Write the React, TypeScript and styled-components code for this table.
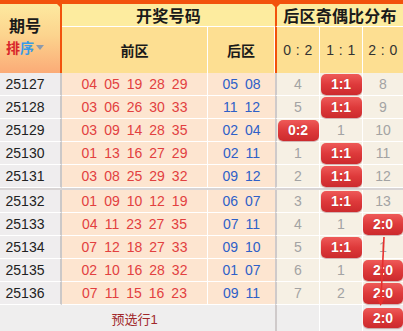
import { createGlobalStyle, styled, css } from "styled-components";

const COLS = "62px 146px 67px 45px 43px 40px";
const ORANGE = "#f2520c";

type Dist = (number | string)[];
type Draw = { period: string; front: string[]; back: string[]; dist: Dist; groupStart?: boolean };

const draws: Draw[] = [
  { period: "25127", front: ["04", "05", "19", "28", "29"], back: ["05", "08"], dist: [4, "1:1", 8] },
  { period: "25128", front: ["03", "06", "26", "30", "33"], back: ["11", "12"], dist: [5, "1:1", 9] },
  { period: "25129", front: ["03", "09", "14", "28", "35"], back: ["02", "04"], dist: ["0:2", 1, 10] },
  { period: "25130", front: ["01", "13", "16", "27", "29"], back: ["02", "11"], dist: [1, "1:1", 11] },
  { period: "25131", front: ["03", "08", "25", "29", "32"], back: ["09", "12"], dist: [2, "1:1", 12] },
  { period: "25132", front: ["01", "09", "10", "12", "19"], back: ["06", "07"], dist: [3, "1:1", 13], groupStart: true },
  { period: "25133", front: ["04", "11", "23", "27", "35"], back: ["07", "11"], dist: [4, 1, "2:0"] },
  { period: "25134", front: ["07", "12", "18", "27", "33"], back: ["09", "10"], dist: [5, "1:1", 1] },
  { period: "25135", front: ["02", "10", "16", "28", "32"], back: ["01", "07"], dist: [6, 1, "2:0"] },
  { period: "25136", front: ["07", "11", "15", "16", "23"], back: ["09", "11"], dist: [7, 2, "2:0"] },
];

const GlobalStyle = createGlobalStyle`
  html, body {
    margin: 0;
    padding: 0;
    background: #ffffff;
  }
  body {
    font-family: "Liberation Sans", "Noto Sans CJK SC", sans-serif;
  }
`;

function App() {
  return (
    <>
      <GlobalStyle />
      <Chart>
        <TopBar />
        <Head>
          <PeriodHead>
            <HeadLabel>期号</HeadLabel>
            <Sort>
              <SortRed>排</SortRed>
              <SortBlue>序</SortBlue>
              <Caret />
            </Sort>
          </PeriodHead>
          <GroupTitle $span={2}>开奖号码</GroupTitle>
          <GroupTitle $span={3} $divider>
            后区奇偶比分布
          </GroupTitle>
          <SubTitle>前区</SubTitle>
          <SubTitle>后区</SubTitle>
          <SubTitle $divider $light>0 : 2</SubTitle>
          <SubTitle $light>1 : 1</SubTitle>
          <SubTitle $light $last>2 : 0</SubTitle>
        </Head>

        {draws.map((d) => (
          <Row key={d.period} $groupStart={d.groupStart}>
            <PeriodCell>{d.period}</PeriodCell>
            <BallCell $divider>
              {d.front.map((n, i) => (
                <Ball key={i}>{n}</Ball>
              ))}
            </BallCell>
            <BallCell>
              {d.back.map((n, i) => (
                <Ball key={i} $blue>
                  {n}
                </Ball>
              ))}
            </BallCell>
            {d.dist.map((v, i) => (
              <DistCell key={i} $first={i === 0} $last={i === 2}>
                {typeof v === "string" ? <Badge>{v}</Badge> : v}
              </DistCell>
            ))}
          </Row>
        ))}

        <Footer>
          <FooterNote>预选行1</FooterNote>
          <FooterCell $first />
          <FooterCell />
          <FooterCell $last>
            <Badge $small>2:0</Badge>
          </FooterCell>
        </Footer>

        <Trend width={403} height={331} viewBox="0 0 403 331">
          <line x1={384} y1={237} x2={381} y2={298} stroke="#e8302e" strokeWidth={1.6} />
          <polygon points="380.6,306 376.2,296.5 385.2,297" fill="#e8302e" />
        </Trend>
      </Chart>
    </>
  );
}

export default App;

const Chart = styled.div`
  position: relative;
  width: 403px;
  height: 331px;
  overflow: hidden;
  background: #efeeee;
`;

const TopBar = styled.div`
  height: 4px;
  background: ${ORANGE};
`;

const Head = styled.div`
  display: grid;
  grid-template-columns: ${COLS};
  grid-template-rows: 23px 46px;
  color: #1a1a1a;
`;

const notch = css`
  &::before {
    content: "";
    position: absolute;
    top: 0;
    width: 0;
    height: 0;
    border-left: 4px solid transparent;
    border-right: 4px solid transparent;
    border-top: 4px solid ${ORANGE};
  }
`;

const PeriodHead = styled.div`
  position: relative;
  grid-row: 1 / 3;
  display: flex;
  flex-direction: column;
  align-items: center;
  justify-content: center;
  gap: 2px;
  padding: 0 10px 4px 0;
  border-right: 2px solid ${ORANGE};
  background: linear-gradient(#fde99f 0%, #fcd48e 45%, #fbab77 100%);

  ${notch}
  &::before {
    right: -5px;
  }
`;

const HeadLabel = styled.div`
  font-size: 16px;
  line-height: 20px;
  font-weight: bold;
  color: #1a1a1a;
`;

const Sort = styled.div`
  display: flex;
  align-items: center;
  font-size: 14px;
  line-height: 18px;
  font-weight: bold;
`;

const SortRed = styled.span`
  color: #d8262b;
`;

const SortBlue = styled.span`
  color: #3a9be6;
`;

const Caret = styled.span`
  margin-left: 2px;
  width: 0;
  height: 0;
  border-left: 4px solid transparent;
  border-right: 4px solid transparent;
  border-top: 5px solid #8c9aab;
`;

const GroupTitle = styled.div<{ $span: number; $divider?: boolean }>`
  position: relative;
  grid-column: span ${(p) => p.$span};
  display: flex;
  align-items: center;
  justify-content: center;
  background: #fdec9f;
  border-bottom: 1px solid #ffffff;
  font-size: 16px;
  font-weight: bold;
  letter-spacing: 0.2px;

  ${(p) =>
    p.$divider &&
    css`
      border-left: 2px solid ${ORANGE};
      ${notch}
      &::before {
        left: -5px;
      }
    `}
`;

const SubTitle = styled.div<{ $divider?: boolean; $light?: boolean; $last?: boolean }>`
  display: flex;
  align-items: center;
  justify-content: center;
  background: #fddf92;
  border-right: ${(p) => (p.$last ? "none" : "1px solid #ffffff")};
  border-left: ${(p) => (p.$divider ? `2px solid ${ORANGE}` : "none")};
  font-size: 14px;
  font-weight: ${(p) => (p.$light ? "normal" : "bold")};
  color: ${(p) => (p.$light ? "#333333" : "#1a1a1a")};
  letter-spacing: ${(p) => (p.$light ? "0.5px" : "0")};
  white-space: pre;
`;

const Row = styled.div<{ $groupStart?: boolean }>`
  display: grid;
  grid-template-columns: ${COLS};
  height: ${(p) => (p.$groupStart ? "25px" : "23px")};
  border-top: ${(p) => (p.$groupStart ? "2px solid #d9d5d5" : "none")};
  box-sizing: border-box;
`;

const PeriodCell = styled.div`
  display: flex;
  align-items: center;
  justify-content: center;
  padding-right: 10px;
  background: #efedee;
  border-right: 2px solid #cbc8c8;
  border-bottom: 1px solid #ffffff;
  font-size: 14px;
  color: #222222;
`;

const BallCell = styled.div<{ $divider?: boolean }>`
  display: flex;
  align-items: center;
  justify-content: center;
  gap: 7px;
  background: #fde5d0;
  border-bottom: 1px solid #ffffff;
  border-right: ${(p) => (p.$divider ? "1px solid #ffffff" : "none")};
`;

const Ball = styled.span<{ $blue?: boolean }>`
  font-size: 14px;
  color: ${(p) => (p.$blue ? "#2e60c8" : "#e2403f")};
`;

const DistCell = styled.div<{ $first?: boolean; $last?: boolean }>`
  display: flex;
  align-items: center;
  justify-content: center;
  background: #f6f0e4;
  border-bottom: 1px solid #ffffff;
  border-left: ${(p) => (p.$first ? "2px solid #cfcaca" : "none")};
  border-right: ${(p) => (p.$last ? "none" : "1px solid #ffffff")};
  font-size: 14px;
  color: #a3a3a3;
`;

const Badge = styled.span<{ $small?: boolean }>`
  display: flex;
  align-items: center;
  justify-content: center;
  width: 41px;
  height: ${(p) => (p.$small ? "20px" : "21px")};
  border-radius: 5px;
  background: linear-gradient(#ee5a58 0%, #de3a3b 50%, #cc2a2d 100%);
  box-shadow: 0 1px 1px rgba(120, 20, 20, 0.35);
  color: #ffffff;
  font-size: 14px;
  font-weight: bold;
  text-shadow: 0 0 1px rgba(120, 0, 0, 0.4);
`;

const Footer = styled.div`
  display: grid;
  grid-template-columns: ${COLS};
  height: 26px;
  background: #efeeee;
`;

const FooterNote = styled.div`
  grid-column: 1 / 4;
  display: flex;
  align-items: center;
  justify-content: center;
  padding-right: 6px;
  font-size: 13px;
  color: #a1282b;
`;

const FooterCell = styled.div<{ $first?: boolean; $last?: boolean }>`
  display: flex;
  align-items: center;
  justify-content: center;
  border-left: ${(p) => (p.$first ? "2px solid #cfcaca" : "none")};
  border-right: ${(p) => (p.$last ? "none" : "1px solid #ffffff")};
`;

const Trend = styled.svg`
  position: absolute;
  top: 0;
  left: 0;
  pointer-events: none;
`;
